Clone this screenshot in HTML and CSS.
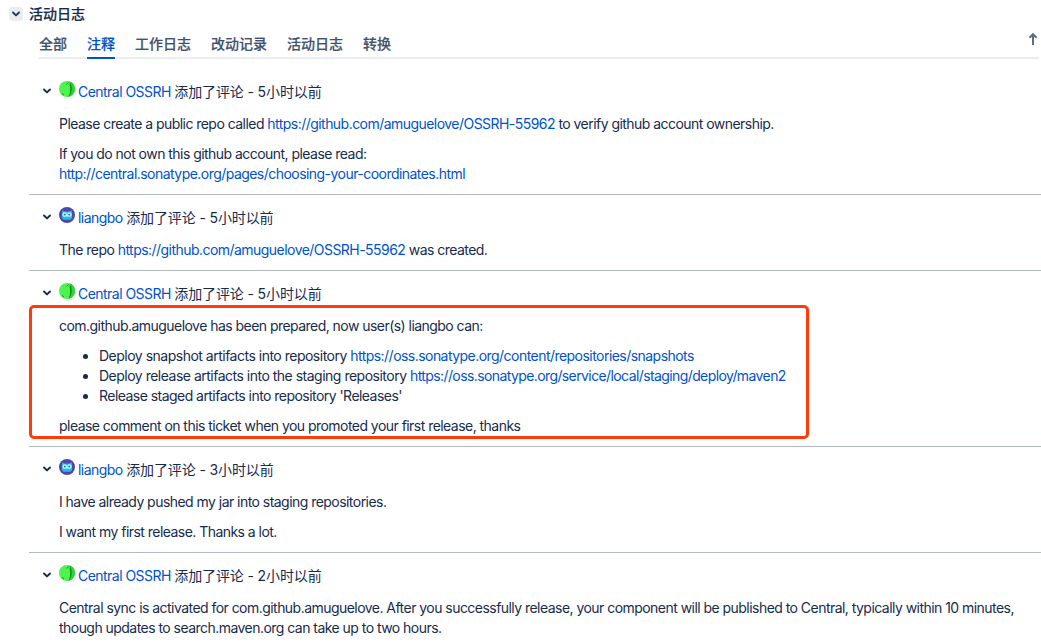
FILE: index.html
```html
<!DOCTYPE html>
<html lang="zh-CN">
<head>
<meta charset="utf-8">
<title>活动日志</title>
<link rel="stylesheet" href="styles.css">
</head>
<body>
<svg class="defs" aria-hidden="true">
  <symbol id="chevron" viewBox="0 0 10 10"><path d="M2 3.500 5 6.400 8 3.500" fill="none" stroke="currentColor" stroke-width="1.900" stroke-linecap="round" stroke-linejoin="round"/></symbol>
  <symbol id="apple" viewBox="0 0 16 16"><circle cx="8" cy="8" r="8" fill="#4bf54b"/><path d="M11 .6C13.500 4 13.500 12 10.500 15.600 14 14.300 16 12 16 8c0-4-2-6.400-5-7.400z" fill="#2ed437"/><path d="M10.500.5C13.800 3.500 13.800 12 10.300 15.500L9.300 15.700C11.600 11.500 11.800 6.500 10.800 3.800z" fill="#179a27"/><path d="M7.500 3.600 9.500 1.500M11 3.500C12 6 12 8.500 11.300 11" fill="none" stroke="#1b7a26" stroke-width=".8"/><path d="M3 12.300 5 14.200" stroke="#3f7a2a" stroke-width="1"/></symbol>
  <symbol id="owl" viewBox="0 0 16 16"><circle cx="8" cy="8" r="8" fill="#5243aa"/><path d="M3.200 3.300 5.500 4.500h5L12.800 3.300l.4 7.500L11.500 12.800h-7L2.800 10.800z" fill="#1cc3e0"/><circle cx="5.600" cy="7.600" r="2.300" fill="#b3f5ff"/><circle cx="10.400" cy="7.600" r="2.300" fill="#b3f5ff"/><circle cx="5.800" cy="7.600" r=".9" fill="#3b5c92"/><circle cx="10.200" cy="7.600" r=".9" fill="#3b5c92"/><path d="M7 8.300h2L8 10.200z" fill="#fff"/></symbol>
</svg>
<section class="activity">
  <header class="heading">
    <button class="toggle" aria-label="折叠"><svg class="chevron"><use href="#chevron"/></svg></button>
    <h4 class="title">活动日志</h4>
  </header>
  <nav class="tabs">
    <a class="tab">全部</a>
    <a class="tab active">注释</a>
    <a class="tab">工作日志</a>
    <a class="tab">改动记录</a>
    <a class="tab">活动日志</a>
    <a class="tab">转换</a>
    <svg class="sort" viewBox="0 0 10 14"><path d="M5 13V3M1.500 5.800 5 2.200l3.500 3.600" fill="none" stroke="currentColor" stroke-width="2"/></svg>
  </nav>
  <div class="comments">
    <article class="comment">
      <div class="meta"><svg class="chevron"><use href="#chevron"/></svg><svg class="avatar"><use href="#apple"/></svg><a class="link author">Central OSSRH</a><span class="when">添加了评论 - 5小时以前</span></div>
      <div class="body">
        <p>Please create a public repo called <a class="link">https://github.com/amuguelove/OSSRH-55962</a> to verify github account ownership.</p>
        <p>If you do not own this github account, please read:<br><a class="link">http://central.sonatype.org/pages/choosing-your-coordinates.html</a></p>
      </div>
    </article>
    <article class="comment">
      <div class="meta"><svg class="chevron"><use href="#chevron"/></svg><svg class="avatar"><use href="#owl"/></svg><a class="link author">liangbo</a><span class="when">添加了评论 - 5小时以前</span></div>
      <div class="body">
        <p>The repo <a class="link">https://github.com/amuguelove/OSSRH-55962</a> was created.</p>
      </div>
    </article>
    <article class="comment marked">
      <div class="meta"><svg class="chevron"><use href="#chevron"/></svg><svg class="avatar"><use href="#apple"/></svg><a class="link author">Central OSSRH</a><span class="when">添加了评论 - 5小时以前</span></div>
      <div class="body">
        <p>com.github.amuguelove has been prepared, now user(s) liangbo can:</p>
        <ul class="list">
          <li>Deploy snapshot artifacts into repository <a class="link">https://oss.sonatype.org/content/repositories/snapshots</a></li>
          <li>Deploy release artifacts into the staging repository <a class="link tight">https://oss.sonatype.org/service/local/staging/deploy/maven2</a></li>
          <li class="tight">Release staged artifacts into repository 'Releases'</li>
        </ul>
        <p>please comment on this ticket when you promoted your first release, thanks</p>
      </div>
    </article>
    <article class="comment">
      <div class="meta"><svg class="chevron"><use href="#chevron"/></svg><svg class="avatar"><use href="#owl"/></svg><a class="link author">liangbo</a><span class="when">添加了评论 - 3小时以前</span></div>
      <div class="body">
        <p>I have already pushed my jar into staging repositories.</p>
        <p>I want my first release. Thanks a lot.</p>
      </div>
    </article>
    <article class="comment">
      <div class="meta"><svg class="chevron"><use href="#chevron"/></svg><svg class="avatar"><use href="#apple"/></svg><a class="link author">Central OSSRH</a><span class="when">添加了评论 - 2小时以前</span></div>
      <div class="body">
        <p>Central sync is activated for com.github.amuguelove. After you successfully release, your component will be published to Central, typically within 10 minutes,<br>though updates to search.maven.org can take up to two hours.</p>
      </div>
    </article>
  </div>
</section>
</body>
</html>
```
FILE: styles.css
```css
*, *::after { box-sizing: border-box; }
body {
  margin: 0;
  height: 644px;
  overflow: hidden;
  background: #fff;
  color: #172b4d;
  font: 14px/20px Inter, "Noto Sans CJK SC", sans-serif;
  letter-spacing: -0.54px;
}
p, h4, ul { margin: 0; }
.defs { position: absolute; width: 0; height: 0; }
.heading { display: flex; align-items: center; gap: 6px; height: 28px; padding-left: 9px; }
.toggle {
  display: flex;
  align-items: center;
  justify-content: center;
  width: 14px;
  height: 14px;
  padding: 0;
  border: 0;
  border-radius: 3px;
  background: #ebecf0;
  color: #253858;
}
.title { font-size: 14px; font-weight: 500; letter-spacing: 0; -webkit-text-stroke: 0.2px; }
.chevron { flex: none; width: 10px; height: 10px; }
.tabs {
  position: relative;
  display: flex;
  gap: 20px;
  height: 31px;
  margin: 0 2px 0 39px;
  border-bottom: 2px solid #ebecf0;
}
.tab { height: 31px; padding-top: 6px; color: #42526e; font-weight: 500; letter-spacing: 0; -webkit-text-stroke: 0.2px; }
.tab.active { color: #0052cc; border-bottom: 2px solid #0052cc; }
.sort { position: absolute; right: 1px; top: 4px; width: 10px; height: 14px; color: #5e6c84; }
.comments { margin-left: 29px; padding-top: 10px; }
.comment { padding: 13px 0 10px 13px; border-bottom: 1px solid #b3bac5; }
.meta { display: flex; height: 20px; }
.meta .chevron { margin: 4px 7px 0 0; }
.avatar { flex: none; width: 16px; height: 16px; margin: -1px 3px 0 0; }
.author { margin-right: 3.5px; }
.when { letter-spacing: -0.12px; }
.link { color: #0052cc; }
.body { display: flex; flex-direction: column; gap: 10px; padding: 12px 0 0 17px; white-space: nowrap; }
.list { padding-left: 40px; letter-spacing: -0.5px; }
.list .link { letter-spacing: -0.54px; }
.list .tight { letter-spacing: -0.6px; }
.list li.tight { letter-spacing: -0.54px; }
.marked { position: relative; }
.marked::after {
  content: "";
  position: absolute;
  left: 0;
  top: 34px;
  width: 780px;
  height: 134px;
  border: 3px solid #ff3b0a;
  border-radius: 5px;
}
```
